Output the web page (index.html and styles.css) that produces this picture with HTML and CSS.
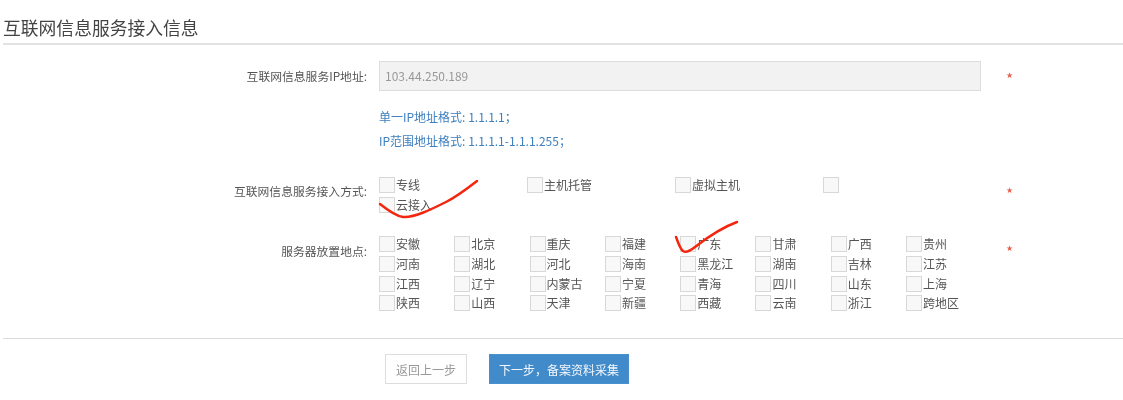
FILE: index.html
```html
<!DOCTYPE html>
<html lang="zh-CN">
<head>
<meta charset="utf-8">
<title>互联网信息服务接入信息</title>
<link rel="stylesheet" href="styles.css">
</head>
<body>
<main class="page">
  <h1 class="title">互联网信息服务接入信息</h1>
  <form class="form">
    <div class="row row-ip">
      <label class="label">互联网信息服务IP地址:</label>
      <div class="field"><input class="input" type="text" value="103.44.250.189" disabled></div>
      <span class="req">★</span>
    </div>
    <div class="hints">
      <p class="hint">单一IP地址格式: 1.1.1.1；</p>
      <p class="hint">IP范围地址格式: 1.1.1.1-1.1.1.255；</p>
    </div>
    <div class="row row-method">
      <span class="label">互联网信息服务接入方式:</span>
      <div class="field methods">
        <label class="opt"><i class="box"></i>专线</label>
        <label class="opt"><i class="box"></i>主机托管</label>
        <label class="opt"><i class="box"></i>虚拟主机</label>
        <label class="opt"><i class="box"></i></label>
        <label class="opt"><i class="box"></i>云接入</label>
      </div>
      <span class="req">★</span>
    </div>
    <div class="row row-place">
      <span class="label">服务器放置地点:</span>
      <div class="field places">
        <label class="opt"><i class="box"></i>安徽</label>
        <label class="opt"><i class="box"></i>北京</label>
        <label class="opt"><i class="box"></i>重庆</label>
        <label class="opt"><i class="box"></i>福建</label>
        <label class="opt"><i class="box"></i>广东</label>
        <label class="opt"><i class="box"></i>甘肃</label>
        <label class="opt"><i class="box"></i>广西</label>
        <label class="opt"><i class="box"></i>贵州</label>
        <label class="opt"><i class="box"></i>河南</label>
        <label class="opt"><i class="box"></i>湖北</label>
        <label class="opt"><i class="box"></i>河北</label>
        <label class="opt"><i class="box"></i>海南</label>
        <label class="opt"><i class="box"></i>黑龙江</label>
        <label class="opt"><i class="box"></i>湖南</label>
        <label class="opt"><i class="box"></i>吉林</label>
        <label class="opt"><i class="box"></i>江苏</label>
        <label class="opt"><i class="box"></i>江西</label>
        <label class="opt"><i class="box"></i>辽宁</label>
        <label class="opt"><i class="box"></i>内蒙古</label>
        <label class="opt"><i class="box"></i>宁夏</label>
        <label class="opt"><i class="box"></i>青海</label>
        <label class="opt"><i class="box"></i>四川</label>
        <label class="opt"><i class="box"></i>山东</label>
        <label class="opt"><i class="box"></i>上海</label>
        <label class="opt"><i class="box"></i>陕西</label>
        <label class="opt"><i class="box"></i>山西</label>
        <label class="opt"><i class="box"></i>天津</label>
        <label class="opt"><i class="box"></i>新疆</label>
        <label class="opt"><i class="box"></i>西藏</label>
        <label class="opt"><i class="box"></i>云南</label>
        <label class="opt"><i class="box"></i>浙江</label>
        <label class="opt"><i class="box"></i>跨地区</label>
      </div>
      <span class="req">★</span>
    </div>
    <div class="actions">
      <button class="btn btn-back" type="button">返回上一步</button>
      <button class="btn btn-next" type="button">下一步，备案资料采集</button>
    </div>
  </form>
</main>
<svg class="ink" width="1123" height="400" viewBox="0 0 1123 400" aria-hidden="true">
  <path d="M380 204C385 208 396 216 403 217C414 218 432 209 446 202C456 197 468 188 477 181"/>
  <path d="M676 237C678 242 680 249 683 251C686 253 690 251 695 247C704 240 718 229 737 222"/>
</svg>
</body>
</html>
```
FILE: styles.css
```css
* { box-sizing: border-box; }
html, body { margin: 0; padding: 0; background: #fff; }
body {
  width: 1123px;
  height: 400px;
  overflow: hidden;
  position: relative;
  font-family: "Noto Sans CJK SC", "Open Sans", "Noto Sans", sans-serif;
  font-size: 12px;
  color: #555;
}
.page { padding: 15px 0 0 3px; filter: blur(0.4px); }
.title {
  margin: 0;
  height: 30px;
  font-size: 17.8px;
  line-height: 24px;
  font-weight: 400;
  color: #444;
  border-bottom: 2px solid #e2e2e2;
}
.row { display: flex; align-items: flex-start; }
.label {
  width: 364px;
  flex: none;
  text-align: right;
  font-size: 11.8px;
  line-height: 18px;
  color: #555;
}
.field { margin-left: 12px; width: 602px; flex: none; }
.req { margin-left: 25px; color: #e8604c; font-family: "DejaVu Sans", sans-serif; font-size: 8px; line-height: 18px; }
.row-ip { margin-top: 16px; height: 30px; }
.row-ip .label { line-height: 30px; }
.row-ip .req { line-height: 30px; }
.input {
  display: block;
  width: 100%;
  height: 30px;
  padding: 0 5px 2px;
  border: 1px solid #ddd;
  background: #f2f2f2;
  font: inherit;
  color: #999;
}
.hints { margin: 18px 0 0 376px; }
.hint { margin: 0; height: 24px; line-height: 16px; color: #3d7fbf; }
.row-method { margin-top: 20px; height: 46px; }
.row-method .label { margin-top: 5px; }
.row-method .req { margin-top: 5px; }
.methods { display: grid; grid-template-columns: repeat(4, 148px); grid-auto-rows: 20px; }
.places { display: grid; grid-template-columns: repeat(8, 75.3px); grid-auto-rows: 19.8px; }
.row-place { margin-top: 13px; height: 89px; }
.row-place .label { margin-top: 6px; }
.row-place .req { margin-top: 4px; }
.opt { display: flex; align-items: center; height: 16px; line-height: 16px; color: #555; white-space: nowrap; }
.box {
  flex: none;
  width: 16px;
  height: 16px;
  margin-right: 1px;
  border: 1px solid #d8d8d8;
  background: #f8f8f8;
}
.actions {
  display: flex;
  gap: 22px;
  margin-top: 13px;
  padding: 15px 0 0 382px;
  border-top: 1px solid #dcdcdc;
}
.btn { height: 30px; padding: 0; font: inherit; }
.btn-back { width: 82px; border: 1px solid #ddd; background: #fff; color: #999; }
.btn-next { width: 140px; border: 1px solid #4a90d0; background: #428bca; color: #f4f8fc; }
.ink {
  position: absolute;
  left: 0;
  top: 0;
  fill: none;
  stroke: #f4260f;
  stroke-width: 2.5;
  stroke-linecap: round;
  stroke-linejoin: round;
}
```
